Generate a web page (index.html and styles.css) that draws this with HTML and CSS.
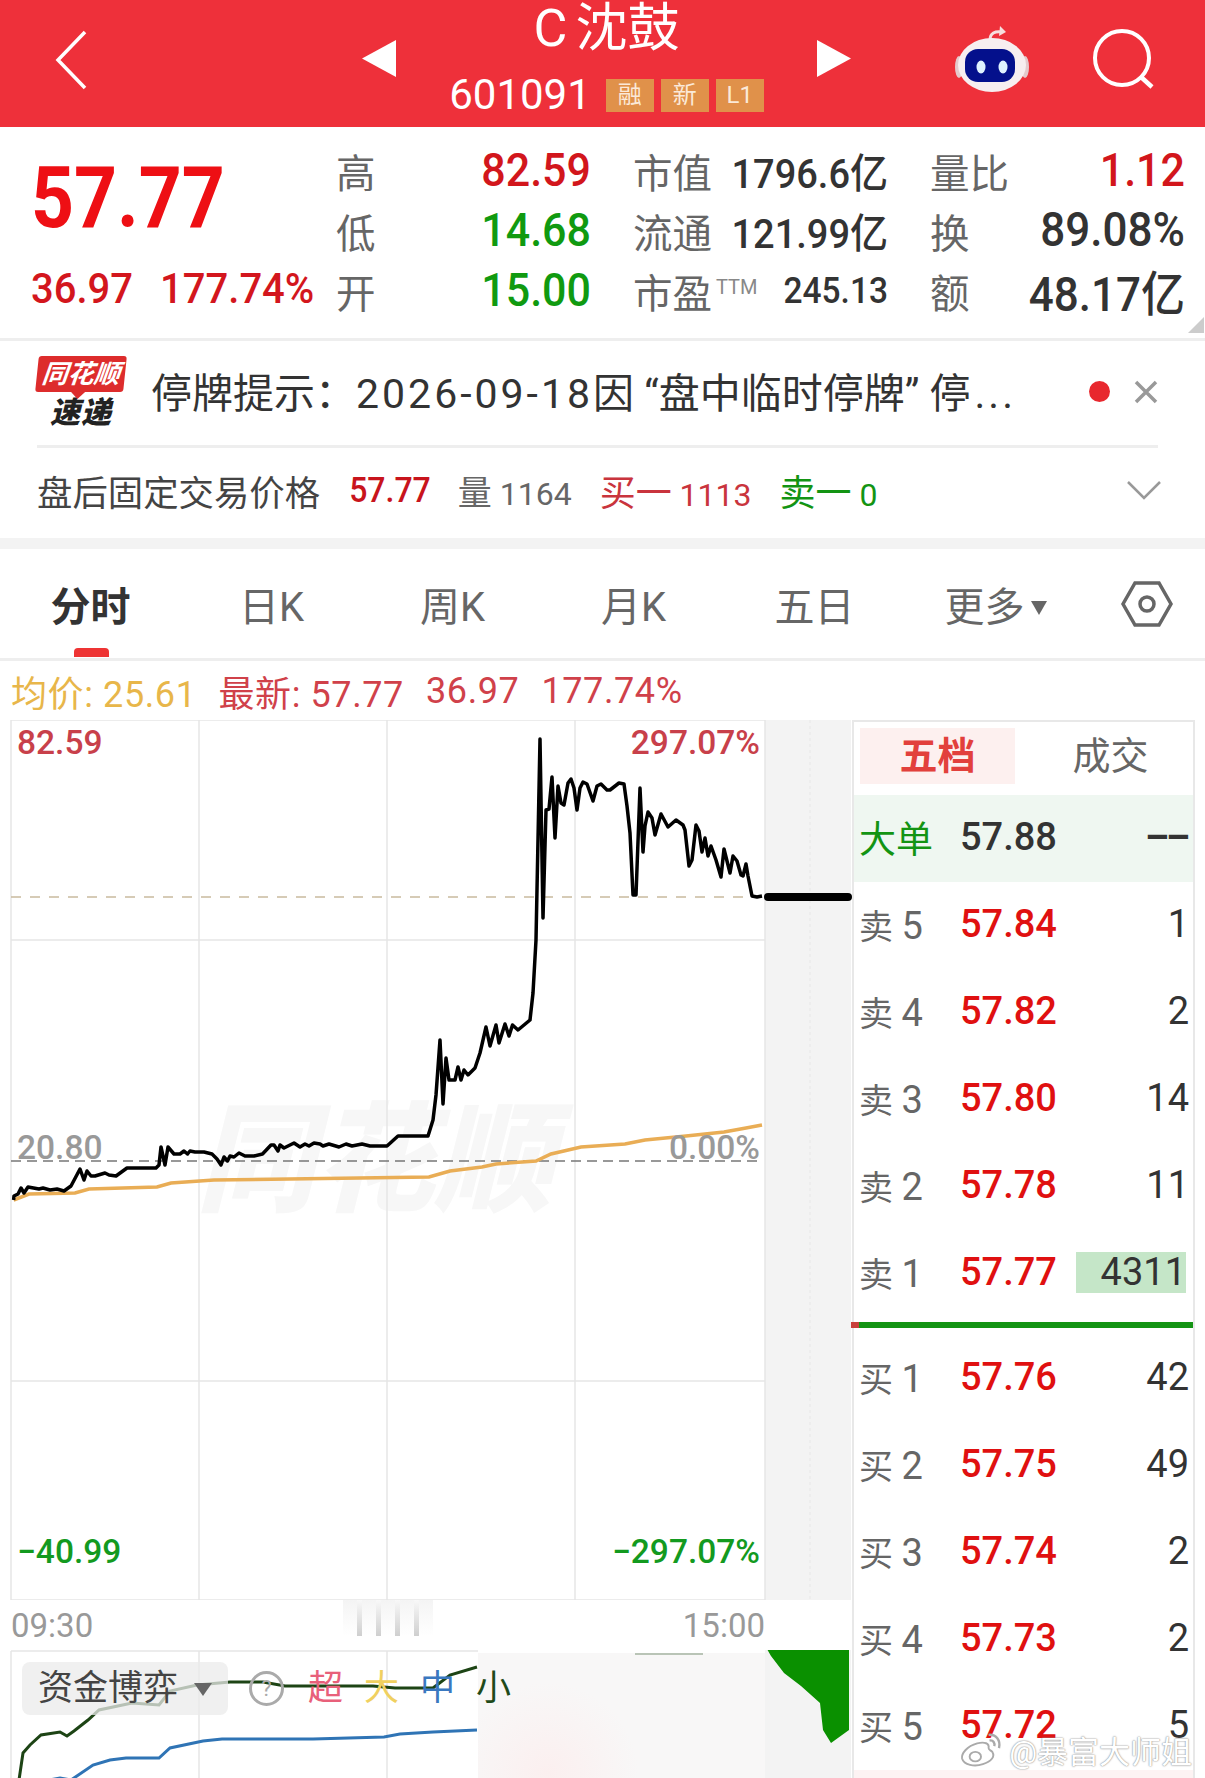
FILE: index.html
```html
<!DOCTYPE html>
<html lang="zh">
<head>
  <meta charset="UTF-8" />
  <title>C沈鼓 601091</title>
  <link rel="stylesheet" href="styles.css">
</head>
<body>

  <header class="top">
    <svg class="back" width="362" height="127" viewBox="0 0 362 127"><path d="M85 32 L58 60 L85 88" fill="none" stroke="#fff" stroke-width="3.5"/></svg>
    <svg class="tri" width="34" height="37" viewBox="0 0 34 37"><path d="M34 0 V37 L0 18.5 Z" fill="#fff"/></svg>
    <div class="name">
      <div class="title"><span>C</span>沈鼓</div>
      <div class="code">
        <span>601091</span>
        <i class="tag">融</i><i class="tag">新</i><i class="tag">L1</i>
      </div>
    </div>
    <svg class="tri" width="34" height="37" viewBox="0 0 34 37"><path d="M0 0 V37 L34 18.5 Z" fill="#fff"/></svg>
    <svg class="robot" width="76" height="70" viewBox="952 26 76 70">
      <path d="M988 40 C988 33 993 31 1000 32" fill="none" stroke="#f6dede" stroke-width="3"/>
      <path d="M998 26 L1004 32 L997 36 Z" fill="#f6dede"/>
      <ellipse cx="957" cy="67" rx="4" ry="11" fill="#e4c9cc"/>
      <ellipse cx="1023" cy="67" rx="4" ry="11" fill="#e4c9cc"/>
      <ellipse cx="990" cy="65" rx="34" ry="27" fill="#f7eef0"/>
      <rect x="963" y="49" width="50" height="33" rx="13" fill="#04108c"/>
      <ellipse cx="979" cy="67" rx="4.5" ry="6.5" fill="#dff2ff"/>
      <ellipse cx="1001" cy="67" rx="4.5" ry="6.5" fill="#dff2ff"/>
    </svg>
    <svg class="search" width="70" height="80" viewBox="1085 20 70 80">
      <circle cx="1120" cy="58" r="27" fill="none" stroke="#fff" stroke-width="4"/>
      <path d="M1139 77 L1150 87" stroke="#fff" stroke-width="4.5"/>
    </svg>
  </header>

  <section class="quote">
    <div class="price">
      <div class="last">57.77</div>
      <div class="chg"><span>36.97</span><span>177.74%</span></div>
    </div>
    <div class="stats">
      <div class="stat"><label>高</label><b class="red">82.59</b></div>
      <div class="stat"><label>市值</label><b class="mid">1796.6亿</b></div>
      <div class="stat"><label>量比</label><b class="red">1.12</b></div>
      <div class="stat"><label>低</label><b class="green">14.68</b></div>
      <div class="stat"><label>流通</label><b class="mid">121.99亿</b></div>
      <div class="stat"><label>换</label><b class="dark">89.08%</b></div>
      <div class="stat"><label>开</label><b class="green">15.00</b></div>
      <div class="stat"><label>市盈<sup>TTM</sup></label><b class="small">245.13</b></div>
      <div class="stat"><label>额</label><b class="dark">48.17亿</b></div>
    </div>
    <span class="corner"></span>
  </section>

  <section class="notice">
    <div class="notice-row">
      <div class="logo">
        <div class="bubble"><span>同花顺</span></div>
        <div class="logo-sub">速递</div>
      </div>
      <div class="notice-text">停牌提示：<span class="date">2026-09-18</span>因 “盘中临时停牌” 停<span class="more">...</span></div>
      <span class="dot"></span>
      <svg class="close" width="24" height="24" viewBox="0 0 24 24"><path d="M2 2 L22 22 M22 2 L2 22" stroke="#999" stroke-width="3.5"/></svg>
    </div>
    <div class="after">
      <span class="after-label">盘后固定交易价格</span>
      <span class="after-price">57.77</span>
      <span class="after-grey"><em>量</em> 1164</span>
      <span class="after-red"><em>买一</em> 1113</span>
      <span class="after-green"><em>卖一</em> 0</span>
      <svg class="chevron" width="34" height="20" viewBox="0 0 34 20"><path d="M1 2 L17 18 L33 2" fill="none" stroke="#999" stroke-width="2.5"/></svg>
    </div>
  </section>

  <nav class="tabs">
    <a class="tab active">分时</a>
    <a class="tab">日K</a>
    <a class="tab">周K</a>
    <a class="tab">月K</a>
    <a class="tab">五日</a>
    <a class="tab">更多<i class="caret"></i></a>
    <svg class="hex" width="52" height="46" viewBox="0 0 52 46">
      <path d="M14 2 H38 L50 23 L38 44 H14 L2 23 Z" fill="none" stroke="#666" stroke-width="3.5"/>
      <circle cx="26" cy="23" r="7" fill="none" stroke="#666" stroke-width="3.5"/>
    </svg>
  </nav>

  <div class="info">
    <span class="avg">均价: 25.61</span>
    <span class="now">最新: 57.77</span>
    <span class="now">36.97</span>
    <span class="now">177.74%</span>
  </div>

  <main class="board">
    <div class="charts">
      <div class="plot">
        <div class="watermark">同花顺</div>
        <svg class="plot-svg" width="852" height="880" viewBox="0 717 852 880">
          <rect x="765" y="717" width="86" height="880" fill="#f3f3f3"/>
          <path d="M810 717 V1597" stroke="#ebebeb" stroke-width="1.5" stroke-dasharray="3 3"/>
          <path d="M11 717 H765 M11 937 H765 M11 1378 H765 M11 1597 H765 M11 717 V1597 M199 717 V1597 M387 717 V1597 M575 717 V1597 M765 717 V1597" fill="none" stroke="#e6e6e6" stroke-width="1.5"/>
          <path d="M11 894 H765" stroke="#c9bb9e" stroke-width="1.5" stroke-dasharray="10 9"/>
          <path d="M11 1158 H760" stroke="#777" stroke-width="1.5" stroke-dasharray="10 6"/>
          <path d="M13.6 1197 L29 1191 L75 1190 L89 1186 L157 1184 L171 1180 L214 1177 L429 1174 L450 1168 L482 1164 L496 1161 L536 1158 L551 1151 L581 1144 L625 1141 L645 1137 L686 1133 L724 1129 L746 1125 L762 1122" fill="none" stroke="#e9ad55" stroke-width="3.5"/>
          <path d="M13.6 1197 L14 1193 L18 1191 L21 1185 L24 1190 L28 1184 L39 1186 L43 1185 L50 1187 L57 1186 L64 1188 L71 1183 L80 1166 L84 1177 L87 1168 L91 1173 L95 1173 L105 1170 L109 1172 L116 1173 L127 1165 L156 1165 L159 1162 L161 1144 L165 1162 L168 1144 L174 1151 L180 1151 L184 1148 L187.5 1151 L190 1148 L195 1149 L204 1149 L212 1151 L217 1156 L221 1162 L224 1154 L227.5 1158 L230 1153 L234 1154 L239 1150 L245 1153 L254 1153 L262.5 1151 L271 1142 L274 1142 L278 1148 L280 1142 L284 1145 L294 1140 L300 1144 L305 1141 L309 1143 L314 1140 L320 1141 L323 1143 L329 1141 L339 1144 L346 1141 L352 1143 L362 1141 L370 1143 L387 1143 L398 1133 L428 1133 L433 1117 L436 1092 L440 1037 L443 1101 L446 1055 L449 1077 L455 1077 L458 1064 L461 1077 L464 1067 L468 1072 L475 1065 L480 1050 L486 1024 L490 1043 L496 1022 L499 1040 L505 1021 L509 1033 L512.5 1022 L518 1027 L530 1017 L533 990 L536 937 L540 736 L543 915 L546 807 L549 806 L552 774 L555 835 L558 783 L561 800 L564 802 L568 780 L571 776 L574 785 L577 807 L580 785 L583 779 L587 781 L593 798 L597 783 L601 781 L607 787 L610 787 L619 780 L624 781 L627 803 L630 830 L633 892 L636 892 L640 785 L643 849 L645 823 L648 809 L652 815 L655 832 L661 811 L668 824 L676 817 L683 822 L685 827 L689 863 L692 857 L696 822 L699 828 L702 849 L705 835 L708 853 L711 843 L716 857 L721 874 L724 846 L730 870 L733 853 L737 858 L741 872 L743 873 L746 861 L748 873 L752 893 L757 894 L762 893" fill="none" stroke="#000" stroke-width="3.5" stroke-linejoin="round"/>
          <path d="M768 894 H848" stroke="#000" stroke-width="8" stroke-linecap="round"/>
        </svg>
        <span class="axis top-left red-soft">82.59</span>
        <span class="axis top-right red-soft">297.07%</span>
        <span class="axis mid-left grey">20.80</span>
        <span class="axis mid-right grey">0.00%</span>
        <span class="axis low-left green-soft">−40.99</span>
        <span class="axis low-right green-soft">−297.07%</span>
      </div>

      <div class="times">
        <span>09:30</span>
        <div class="grip"><i></i><i></i><i></i><i></i></div>
        <span>15:00</span>
      </div>

      <div class="sub">
        <svg class="plot-svg" width="852" height="131" viewBox="0 1647 852 131">
          <rect x="765" y="1647" width="86" height="131" fill="#f3f3f3"/>
          <path d="M11 1648 H478 M11 1648 V1778 M199 1648 V1778 M387 1648 V1778" fill="none" stroke="#e6e6e6" stroke-width="1.5"/>
          <path d="M19 1777 L23 1750 L30 1742 L41 1732 L60 1729 L67 1733 L74 1728 L88 1717 L99 1707 L132 1700 L159 1702 L170 1688 L197 1682 L230 1679 L263 1679 L285 1683 L307 1683 L340 1683 L373 1683 L395 1685 L433 1685 L450 1672 L477 1664" fill="none" stroke="#1d4415" stroke-width="3"/>
          <path d="M44 1778 L60 1775 L71 1777 L93 1762 L110 1757 L126 1755 L159 1755 L170 1745 L203 1738 L222 1736 L274 1736 L313 1736 L384 1734 L400 1731 L433 1729 L477 1727" fill="none" stroke="#2f74b5" stroke-width="3"/>
          <path d="M767 1646 H849 V1727 L831 1740 L823 1727 L820 1700 L801 1683 L784 1670 L771 1653 Z" fill="#0a9000"/>
        </svg>
        <div class="blur"><i class="blur-line"></i></div>
        <div class="legend">
          <div class="chip">资金博弈<i class="chip-caret"></i></div>
          <span class="help">?</span>
          <span class="l-super">超</span>
          <span class="l-big">大</span>
          <span class="l-mid">中</span>
          <span class="l-small">小</span>
        </div>
      </div>
    </div>

    <aside class="book">
      <div class="book-tabs">
        <span class="book-tab on">五档</span>
        <span class="book-tab">成交</span>
      </div>
      <div class="row big"><span class="lab">大单</span><span class="val dark-val">57.88</span><span class="qty dash">––</span></div>
      <div class="row"><span class="lab">卖 <em>5</em></span><span class="val">57.84</span><span class="qty">1</span></div>
      <div class="row"><span class="lab">卖 <em>4</em></span><span class="val">57.82</span><span class="qty">2</span></div>
      <div class="row"><span class="lab">卖 <em>3</em></span><span class="val">57.80</span><span class="qty">14</span></div>
      <div class="row"><span class="lab">卖 <em>2</em></span><span class="val">57.78</span><span class="qty">11</span></div>
      <div class="row"><span class="lab">卖 <em>1</em></span><span class="val">57.77</span><span class="qty hot">4311</span></div>
      <div class="split"><i></i></div>
      <div class="row"><span class="lab">买 <em>1</em></span><span class="val">57.76</span><span class="qty">42</span></div>
      <div class="row"><span class="lab">买 <em>2</em></span><span class="val">57.75</span><span class="qty">49</span></div>
      <div class="row"><span class="lab">买 <em>3</em></span><span class="val">57.74</span><span class="qty">2</span></div>
      <div class="row"><span class="lab">买 <em>4</em></span><span class="val">57.73</span><span class="qty">2</span></div>
      <div class="row"><span class="lab">买 <em>5</em></span><span class="val">57.72</span><span class="qty">5</span></div>
      <div class="book-foot"></div>
    </aside>

    <div class="weibo">
      <svg width="44" height="36" viewBox="0 0 46 38">
        <path d="M19 12 C8 15 2 23 3 28 C5 35 16 37 25 34 C34 31 38 26 35 21 C33 19 31 19 31 17 C32 12 27 10 19 12 Z" fill="#fff" fill-opacity=".7" stroke="#aaa" stroke-width="2"/>
        <ellipse cx="17" cy="26" rx="6" ry="5" fill="none" stroke="#aaa" stroke-width="2"/>
        <path d="M31 3 C39 2 44 9 42 17 M32 9 C36 8 38 12 37 15" fill="none" stroke="#aaa" stroke-width="2.5"/>
      </svg>
      <span>@暴富大师姐</span>
    </div>
  </main>

</body>
</html>
```

FILE: styles.css
```css
* {
  box-sizing: border-box;
}
body {
  margin: 0;
  width: 1205px;
  height: 1778px;
  overflow: hidden;
  background: #fff;
  font-family: Roboto, "Noto Sans CJK SC", sans-serif;
  color: #333;
}
i, em {
  font-style: normal;
}

/* header */
.top {
  height: 127px;
  background: #ee303a;
  display: flex;
  align-items: flex-start;
  color: #fff;
}
.back {
  flex: none;
}
.tri {
  flex: none;
  margin-top: 40px;
}
.name {
  width: 421px;
  text-align: center;
}
.title {
  font-size: 52px;
  line-height: 58px;
}
.title span {
  margin-right: 8px;
}
.code {
  display: flex;
  justify-content: center;
  align-items: center;
  margin-top: 14px;
  font-size: 42px;
  line-height: 46px;
}
.code span {
  margin-right: 15px;
}
.tag {
  width: 48px;
  height: 33px;
  margin-right: 7px;
  background: #e0914a;
  color: #fbe9d8;
  font-size: 24px;
  line-height: 33px;
  text-align: center;
}
.tag:last-child {
  margin-right: 0;
}
.robot {
  flex: none;
  margin: 26px 0 0 103px;
}
.search {
  flex: none;
  margin: 20px 0 0 57px;
}

/* quote */
.quote {
  position: relative;
  height: 214px;
  border-bottom: 3px solid #eee;
  display: flex;
}
.price {
  width: 336px;
  padding-left: 31px;
}
.last {
  margin-top: 20px;
  height: 100px;
  font-size: 75px;
  line-height: 100px;
  font-weight: 700;
  color: #ee0f14;
  transform: scaleY(1.14);
  transform-origin: left center;
}
.chg {
  margin-top: 17px;
  display: flex;
  gap: 27px;
  font-size: 40px;
  line-height: 50px;
  font-weight: 500;
  color: #d3161d;
  transform: scaleY(1.06);
}
.stats {
  margin-top: 13px;
  width: 849px;
  display: grid;
  grid-template-columns: repeat(3, 255px);
  grid-auto-rows: 60px;
  column-gap: 42px;
}
.stat {
  display: flex;
  justify-content: space-between;
  align-items: center;
}
.stat label {
  font-size: 39.5px;
  color: #666;
  white-space: nowrap;
}
.stat sup {
  font-size: 20px;
  color: #888;
  margin-left: 4px;
  vertical-align: 14px;
  line-height: 0;
}
.stat b {
  font-weight: 500;
  font-size: 43px;
  white-space: nowrap;
  transform: scaleY(1.08);
}
.stat b.mid {
  font-size: 38px;
  color: #333;
}
.stat b.small {
  font-size: 33.5px;
  color: #333;
}
.stat b.dark {
  font-size: 44px;
  color: #333;
}
.red {
  color: #d2161c;
}
.green {
  color: #109a10;
}
.corner {
  position: absolute;
  right: 1px;
  bottom: 5px;
  width: 0;
  height: 0;
  border-left: 16px solid transparent;
  border-bottom: 16px solid #ccc;
}

/* notice */
.notice {
  height: 194px;
  padding: 0 47px 0 37px;
  border-bottom: 0;
}
.notice-row {
  height: 107px;
  padding-bottom: 3px;
  display: flex;
  align-items: center;
  border-bottom: 3px solid #eee;
}
.logo {
  width: 88px;
  flex: none;
  text-align: center;
}
.bubble {
  position: relative;
  height: 36px;
  background: #dd2c2c;
  border-radius: 3px;
  transform: skewX(-6deg);
  color: #fff;
  font-size: 26px;
  line-height: 36px;
  font-weight: 700;
  font-style: italic;
  white-space: nowrap;
}
.bubble::after {
  content: "";
  position: absolute;
  left: 36px;
  bottom: -7px;
  border-top: 7px solid #dd2c2c;
  border-left: 7px solid transparent;
  border-right: 7px solid transparent;
}
.logo-sub {
  margin-top: 5px;
  font-size: 30px;
  line-height: 31px;
  font-weight: 900;
  font-style: italic;
  color: #222;
  letter-spacing: 1px;
}
.notice-text {
  margin-left: 26px;
  width: 885px;
  padding-bottom: 3px;
  font-size: 41px;
  color: #333;
  white-space: nowrap;
}
.date {
  letter-spacing: 3px;
}
.more {
  letter-spacing: 3px;
  margin-left: 4px;
}
.dot {
  flex: none;
  margin-left: 54px;
  width: 21px;
  height: 21px;
  border-radius: 50%;
  background: #e8282e;
}
.close {
  flex: none;
  margin-left: 24px;
}
.after {
  position: relative;
  height: 84px;
  display: flex;
  align-items: center;
  white-space: nowrap;
  font-size: 32px;
}
.after-label {
  font-size: 35.4px;
  color: #444;
  margin-right: 29px;
}
.after-price {
  font-weight: 500;
  color: #c8141c;
  margin-right: 27px;
  transform: scaleY(1.1);
}
.after em {
  font-size: 34px;
}
.after-grey {
  color: #666;
  margin-right: 28px;
}
.after-red {
  color: #c9343d;
  margin-right: 28px;
}
.after-red em, .after-green em {
  font-size: 36px;
}
.after-green {
  color: #139413;
}
.chevron {
  margin-left: auto;
  margin-right: -3px;
}

/* tabs */
.tabs {
  margin-top: 3px;
  height: 123px;
  border-top: 11px solid #f3f3f3;
  border-bottom: 3px solid #eee;
  display: grid;
  grid-template-columns: repeat(6, 181px) 1fr;
  align-items: center;
  justify-items: center;
}
.tab {
  position: relative;
  font-size: 40px;
  color: #666;
  white-space: nowrap;
}
.tab.active {
  font-weight: 700;
  color: #333;
}
.tab.active::after {
  content: "";
  position: absolute;
  left: 23px;
  bottom: -24px;
  width: 35px;
  height: 9px;
  border-radius: 4px 4px 0 0;
  background: #ee3434;
}
.caret {
  display: inline-block;
  margin-left: 6px;
  vertical-align: 6px;
  border-top: 14px solid #666;
  border-left: 8px solid transparent;
  border-right: 8px solid transparent;
}
.hex {
  margin-left: 2px;
}

/* info line */
.info {
  height: 59px;
  padding-left: 11px;
  display: flex;
  align-items: center;
  gap: 22px;
  font-size: 36px;
  letter-spacing: 0.6px;
  white-space: nowrap;
}
.avg {
  color: #e8b64a;
}
.now {
  color: #d0414a;
}

/* charts */
.board {
  position: relative;
  display: flex;
  height: 1061px;
  overflow: hidden;
}
.charts {
  width: 852px;
  flex: none;
}
.plot {
  position: relative;
  height: 880px;
}
.plot-svg {
  position: absolute;
  left: 0;
  top: 0;
}
.watermark {
  position: absolute;
  left: 196px;
  top: 382px;
  font-size: 119px;
  line-height: 120px;
  font-weight: 900;
  font-style: italic;
  color: #f7f7f7;
  white-space: nowrap;
}
.axis {
  position: absolute;
  z-index: 1;
  font-size: 33.5px;
  font-weight: 500;
  line-height: 40px;
  white-space: nowrap;
}
.red-soft {
  color: #c8404a;
}
.green-soft {
  color: #139a1f;
}
.grey {
  color: #999;
}
.top-left {
  left: 17px;
  top: 3px;
}
.top-right {
  right: 92px;
  top: 3px;
}
.mid-left {
  left: 17px;
  top: 408px;
}
.mid-right {
  right: 92px;
  top: 408px;
}
.low-left {
  left: 17px;
  top: 812px;
}
.low-right {
  right: 92px;
  top: 812px;
}
.times {
  height: 50px;
  padding: 0 87px 0 11px;
  display: flex;
  justify-content: space-between;
  align-items: center;
  font-size: 33px;
  color: #999;
}
.grip {
  align-self: flex-start;
  width: 90px;
  height: 36px;
  padding: 0 14px;
  display: flex;
  justify-content: space-between;
  background: linear-gradient(#f4f4f4, #fff);
}
.grip i {
  width: 5px;
  height: 36px;
  background: linear-gradient(#f8f8f8, #cfcfcf);
}
.sub {
  position: relative;
  height: 131px;
}
.blur {
  position: absolute;
  left: 478px;
  top: 3px;
  width: 287px;
  height: 128px;
  background: radial-gradient(ellipse 90px 90px at 70px 120px, #fbefef, #f8f7f7);
}
.blur-line {
  display: block;
  width: 68px;
  height: 2px;
  margin-left: 157px;
  background: #b9c4b6;
}
.legend {
  position: absolute;
  left: 22px;
  top: 12px;
  display: flex;
  align-items: center;
  font-size: 35px;
  line-height: 53px;
}
.chip {
  width: 206px;
  height: 53px;
  padding-left: 16px;
  background: rgba(235, 235, 235, 0.75);
  border-radius: 8px;
  color: #444;
  white-space: nowrap;
}
.chip-caret {
  display: inline-block;
  margin-left: 16px;
  vertical-align: 4px;
  border-top: 13px solid #666;
  border-left: 9px solid transparent;
  border-right: 9px solid transparent;
}
.help {
  width: 35px;
  height: 35px;
  margin: 0 24px 0 21px;
  border: 3px solid #aaa;
  border-radius: 50%;
  font-size: 22px;
  line-height: 29px;
  text-align: center;
  color: #aaa;
}
.l-super, .l-big, .l-mid, .l-small {
  width: 56px;
}
.l-super {
  color: #e8607a;
}
.l-big {
  color: #f0d060;
}
.l-mid {
  color: #3a78c0;
}
.l-small {
  color: #1f4a1a;
}

/* order book */
.book {
  width: 343px;
  flex: none;
  border-left: 2px solid #e8e8e8;
  border-right: 2px solid #e8e8e8;
  border-top: 2px solid #e8e8e8;
}
.book-tabs {
  height: 73px;
  padding: 6px 0 0 6px;
  display: flex;
  align-items: flex-start;
}
.book-tab {
  width: 155px;
  height: 56px;
  font-size: 38px;
  line-height: 56px;
  text-align: center;
  color: #666;
}
.book-tab.on {
  background: #fdf0ef;
  color: #e2403c;
  font-weight: 700;
}
.book-tab + .book-tab {
  margin-left: 18px;
}
.row {
  height: 87px;
  padding: 0 4px 3px 5px;
  display: flex;
  align-items: center;
  white-space: nowrap;
}
.row.big {
  background: #eff7f1;
}
.lab {
  width: 101px;
  flex: none;
  font-size: 34px;
  color: #666;
}
.lab em {
  font-size: 38px;
}
.big .lab {
  color: #139413;
  font-size: 37px;
}
.val {
  font-size: 38px;
  font-weight: 500;
  color: #e01010;
}
.dark-val {
  color: #333;
}
.qty {
  margin-left: auto;
  font-size: 38px;
  color: #333;
}
.dash {
  font-weight: 700;
  letter-spacing: -3px;
  margin-right: 2px;
}
.hot {
  width: 110px;
  height: 41px;
  margin-right: 3px;
  line-height: 41px;
  text-align: right;
  background: #c5e6c8;
}
.split {
  height: 6px;
  margin: 5px 0 7px -3px;
  background: #149414;
}
.split i {
  display: block;
  width: 8px;
  height: 6px;
  background: #c8413c;
}
.book-foot {
  height: 12px;
  background: #fdf3f3;
}
.weibo {
  position: absolute;
  right: 13px;
  bottom: 9px;
  display: flex;
  align-items: center;
  gap: 6px;
  font-size: 31px;
  color: #fff;
  text-shadow: 0 0 2px #999, 0 0 1px #888;
  white-space: nowrap;
}
```
